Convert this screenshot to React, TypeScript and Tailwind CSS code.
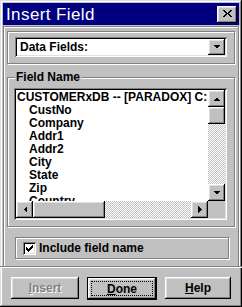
import React from "react";

const Arrow = ({ dir }: { dir: "up" | "down" | "left" | "right" }) => {
  const pts: Record<string, string> = {
    up: "0,4 7,4 3.5,0.5",
    down: "0,0 7,0 3.5,3.5",
    left: "4,0 4,7 0.5,3.5",
    right: "0,0 0,7 3.5,3.5",
  };
  const vertical = dir === "up" || dir === "down";
  return (
    <svg width={vertical ? 7 : 4} height={vertical ? 4 : 7} viewBox={vertical ? "0 0 7 4" : "0 0 4 7"} shapeRendering="crispEdges">
      <polygon points={pts[dir]} fill="#000" />
    </svg>
  );
};

const Btn = ({ children, className = "" }: { children?: React.ReactNode; className?: string }) => (
  <div className={"bg-[#c0c0c0] flex items-center justify-center shadow-[inset_-1px_-1px_#000,inset_1px_1px_#fff,inset_-2px_-2px_#808080,inset_2px_2px_#dfdfdf] " + className}>
    {children}
  </div>
);

const items = ["CustNo", "Company", "Addr1", "Addr2", "City", "State", "Zip", "Country"];

export default function App() {
  return (
    <div className="w-[242px] h-[307px] bg-[#c0c0c0] p-[3px] flex flex-col font-['Liberation_Sans',Arial,sans-serif] text-[12px] font-bold text-black shadow-[inset_-1px_-1px_#000,inset_1px_1px_#dfdfdf,inset_-2px_-2px_#808080,inset_2px_2px_#fff]">
      {/* Title bar */}
      <div className="h-[22px] bg-[#000080] flex items-center justify-between pl-[3px] pr-[2px]">
        <span className="text-white font-normal text-[17px] tracking-[0.4px] leading-none">Insert Field</span>
        <Btn className="w-[20px] h-[17px]">
          <svg width="9" height="8" viewBox="0 0 9 8" shapeRendering="crispEdges">
            <path d="M0 0h2v1h1v1h1v1h1v-1h1v-1h1v-1h2v1h-1v1h-1v1h-1v1h1v1h1v1h1v1h-2v-1h-1v-1h-1v-1h-1v1h-1v1h-1v1h-2v-1h1v-1h1v-1h1v-1h-1v-1h-1v-1h-1z" fill="#000" />
          </svg>
        </Btn>
      </div>

      {/* Main panel */}
      <div className="mt-[1px] h-[240px] border-l border-t border-r border-[#808080] shadow-[inset_1px_1px_#fff,1px_0_#fff] px-[3px] pt-[4px]">
        {/* Data fields box */}
        <div className="h-[33px] border border-[#808080] shadow-[inset_1px_1px_#fff,1px_1px_#fff] pl-[7px] pt-[5px]">
          <div className="w-[212px] h-[20px] bg-white flex items-center justify-between pl-[5px] pr-[2px] shadow-[inset_1px_1px_#808080,inset_-1px_-1px_#fff,inset_2px_2px_#000,inset_-2px_-2px_#dfdfdf]">
            <span>Data Fields:</span>
            <Btn className="w-[17px] h-[16px]">
              <Arrow dir="down" />
            </Btn>
          </div>
        </div>

        {/* Field Name group */}
        <div className="relative mt-[13px] h-[150px] border border-[#808080] shadow-[inset_1px_1px_#fff,1px_1px_#fff] pl-[6px] pt-[10px]">
          <span className="absolute left-[7px] top-[-8px] bg-[#c0c0c0] px-[1px] leading-[14px]">Field Name</span>
          <div className="w-[213px] h-[132px] bg-white p-[2px] shadow-[inset_1px_1px_#808080,inset_-1px_-1px_#fff,inset_2px_2px_#000,inset_-2px_-2px_#dfdfdf] flex flex-col">
            <div className="flex flex-1 min-h-0">
              <div className="flex-1 overflow-hidden pl-[1px] whitespace-nowrap leading-[13px] pt-[1px]">
                <div>CUSTOMERxDB -- [PARADOX] C:</div>
                {items.map((t) => (
                  <div key={t} className="pl-[12px]">{t}</div>
                ))}
              </div>
              <div className="w-[17px] flex flex-col">
                <Btn className="h-[17px]"><Arrow dir="up" /></Btn>
                <Btn className="h-[17px]" />
                <div className="flex-1 bg-[repeating-conic-gradient(#c0c0c0_0_25%,#fff_0_50%)] bg-[length:2px_2px]" />
                <Btn className="h-[17px]"><Arrow dir="down" /></Btn>
              </div>
            </div>
            <div className="flex h-[17px]">
              <Btn className="w-[17px]"><Arrow dir="left" /></Btn>
              <Btn className="w-[72px]" />
              <div className="flex-1 bg-[repeating-conic-gradient(#c0c0c0_0_25%,#fff_0_50%)] bg-[length:2px_2px]" />
              <Btn className="w-[17px]"><Arrow dir="right" /></Btn>
              <div className="w-[17px] bg-[#c0c0c0]" />
            </div>
          </div>
        </div>

        {/* Checkbox box */}
        <div className="mt-[10px] ml-[8px] w-[214px] h-[22px] border border-[#808080] shadow-[inset_1px_1px_#fff,1px_1px_#fff] flex items-center pl-[7px] gap-[3px]">
          <div className="w-[13px] h-[13px] bg-white flex items-center justify-center shadow-[inset_1px_1px_#808080,inset_-1px_-1px_#fff,inset_2px_2px_#000,inset_-2px_-2px_#dfdfdf]">
            <svg width="7" height="7" viewBox="0 0 7 7" shapeRendering="crispEdges">
              <path d="M0 2h1v1h1v1h1v-1h1v-1h1v-1h1v-1h1v3h-1v1h-1v1h-1v1h-1v1h-1v-1h-1v-1h-1z" fill="#000" />
            </svg>
          </div>
          <span>Include field name</span>
        </div>
      </div>

      {/* Separator spanning the full width */}
      <div className="-mx-[3px] h-[2px] border-t border-[#808080] border-b border-b-white" />

      {/* Buttons */}
      <div className="flex gap-[8px] pl-[8px] mt-[9px]">
        <Btn className="w-[68px] h-[22px]">
          <span className="text-[#808080] [text-shadow:1px_1px_#fff]"><u>I</u>nsert</span>
        </Btn>
        <div className="w-[70px] h-[23px] border border-black">
          <Btn className="w-full h-full p-[3px]">
            <div className="w-full h-full flex items-center justify-center border border-dotted border-black">
              <span><u>D</u>one</span>
            </div>
          </Btn>
        </div>
        <Btn className="w-[66px] h-[22px]">
          <span><u>H</u>elp</span>
        </Btn>
      </div>
    </div>
  );
}
